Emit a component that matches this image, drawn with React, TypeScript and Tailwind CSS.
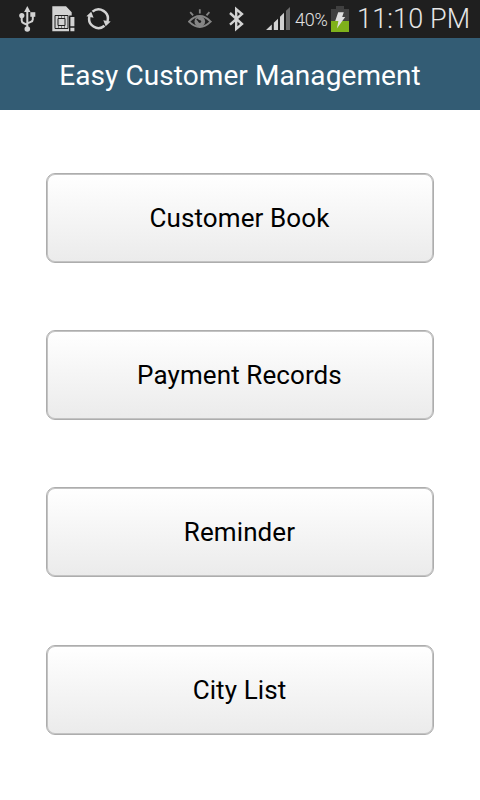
import React from 'react';

const items = [
  { label: 'Customer Book', spacing: 'mb-[67px]' },
  { label: 'Payment Records', spacing: 'mb-[67px]' },
  { label: 'Reminder', spacing: 'mb-[68px]' },
  { label: 'City List', spacing: '' },
];

function UsbIcon() {
  return (
    <svg width="18" height="26" viewBox="0 0 18 26" className="ml-[18px]" fill="none" stroke="#d2d2d2" strokeWidth="2">
      <path d="M9.3 5v17M3.7 10v4.5q0 2 2.1 2.8l3.5 1.5M14.8 9v4.5q0 1.7-2 2.4l-3.5 1.5" />
      <path d="M9.3 0l3.2 6H6.1z" fill="#d2d2d2" stroke="none" />
      <circle cx="3.8" cy="9.6" r="2.6" fill="#d2d2d2" stroke="none" />
      <path d="M12.3 6.2h5v4.6h-5z" fill="#d2d2d2" stroke="none" />
      <circle cx="9.3" cy="23" r="2.8" fill="#d2d2d2" stroke="none" />
    </svg>
  );
}

function SimIcon() {
  return (
    <svg width="24" height="26" viewBox="0 0 24 26" className="ml-4">
      <path d="M.3.3H14l5.7 6v4.2H17v14.8H.3z" fill="#d2d2d2" />
      <path d="M3 9.5h13v13H3z" stroke="#1f1f1f" fill="none" />
      <path d="M6 12.5h7v7H6z" stroke="#1f1f1f" fill="none" />
      <path d="M6.5 10v2M9.5 10v2M12.5 10v2M6.5 20v2M9.5 20v2M12.5 20v2" stroke="#555" strokeWidth=".7" />
      <path d="M17.2 9.5h6.6v16h-6.6z" fill="#1f1f1f" />
      <path d="M18.4 11h4v9.2h-4zM18.4 21.8h4v3.5h-4z" fill="#d2d2d2" />
    </svg>
  );
}

function SyncIcon() {
  return (
    <svg width="26" height="24" viewBox="0 0 26 24" className="ml-[10px]" fill="none" stroke="#d2d2d2" strokeWidth="2.5">
      <path d="M6.5 4.6A9.3 9.3 0 0 1 21.5 14.1" />
      <path d="M18.5 18.8A9.3 9.3 0 0 1 3.5 9.3" />
      <path d="M17.3 13.2l7.4 1.2-5 4.9zM.4 9.3L5.2 4.7l2.4 6z" fill="#d2d2d2" stroke="none" />
    </svg>
  );
}

function EyeIcon() {
  return (
    <svg width="24" height="20" viewBox="0 0 24 20" className="ml-[76px]" fill="none" stroke="#858585">
      <path d="M1 12.6Q11.8 1.6 22.6 12.6 11.8 23.2 1 12.6z" strokeWidth="2" />
      <circle cx="11.8" cy="12.5" r="5.3" fill="#858585" stroke="none" />
      <path d="M11.7 12.6L8.8 10" stroke="#1f1f1f" strokeWidth="1.6" />
      <circle cx="11.8" cy="12.6" r="1.4" fill="#1f1f1f" stroke="none" />
      <path d="M11.8.3v4.2M2.2 3.2l2.9 3.2M21.4 3.2l-2.9 3.2" strokeWidth="1.8" />
    </svg>
  );
}

function BluetoothIcon() {
  return (
    <svg width="16" height="26" viewBox="0 0 16 26" className="ml-[17px]" fill="none" stroke="#d2d2d2" strokeWidth="2.4">
      <path d="M1 7l12 11-5.8 5V3L13 8 1 18.7" />
    </svg>
  );
}

function SignalIcon() {
  return (
    <svg width="24" height="24" viewBox="0 0 24 24" className="ml-[21px]" fill="#d2d2d2">
      <path d="M0 23l5.8-5.6V23zM7.8 15.7l4.2-4V23H7.8zM14 9.8l4-4V23h-4z" />
      <path d="M20 3.8L24 0v23h-4z" fill="#6b6b6b" />
    </svg>
  );
}

function BatteryIcon() {
  return (
    <svg width="18" height="26" viewBox="0 0 18 26" className="ml-[3px]">
      <path d="M5 0h8v3h5v12.5H0V3h5z" fill="#404040" />
      <path d="M0 15h18v11H0z" fill="#7fb11b" />
      <path d="M7.2 6.2h5.6l-1.6 4.9h3L5.9 22.5l1.5-7.4H4.2z" fill="#dedede" />
    </svg>
  );
}

function StatusBar() {
  return (
    <div className="flex h-[38px] items-center bg-[#1f1f1f] text-[#d2d2d2]">
      <UsbIcon />
      <SimIcon />
      <SyncIcon />
      <EyeIcon />
      <BluetoothIcon />
      <SignalIcon />
      <span className="ml-[5px] w-[33px] whitespace-nowrap pt-[2px] text-[18px] font-light leading-none tracking-[-0.2px] text-[#e2e2e2]">40%</span>
      <BatteryIcon />
      <span className="ml-2 whitespace-nowrap text-[27px] font-light leading-[38px] tracking-[0.15px] text-[#e6e6e6]">11:10 PM</span>
    </div>
  );
}

export default function App() {
  return (
    <div className="h-[800px] w-[480px] overflow-hidden bg-white font-[Roboto,sans-serif]">
      <StatusBar />
      <header className="flex h-[72px] items-center justify-center bg-[#335c74] pt-[3px]">
        <h1 className="whitespace-nowrap text-[28px] leading-none tracking-[0.08px] text-white">Easy Customer Management</h1>
      </header>
      <main className="flex flex-col px-[46px] pt-[63px]">
        {items.map((item) => (
          <button
            key={item.label}
            className={`${item.spacing} h-[90px] shrink-0 rounded-[9px] border border-[#adadad] bg-linear-to-b from-white to-[#ebebeb] pr-px text-[26px] leading-none tracking-[0.1px] text-black shadow-[inset_0_0_0_1px_#c3c3c3]`}
          >
            {item.label}
          </button>
        ))}
      </main>
    </div>
  );
}
